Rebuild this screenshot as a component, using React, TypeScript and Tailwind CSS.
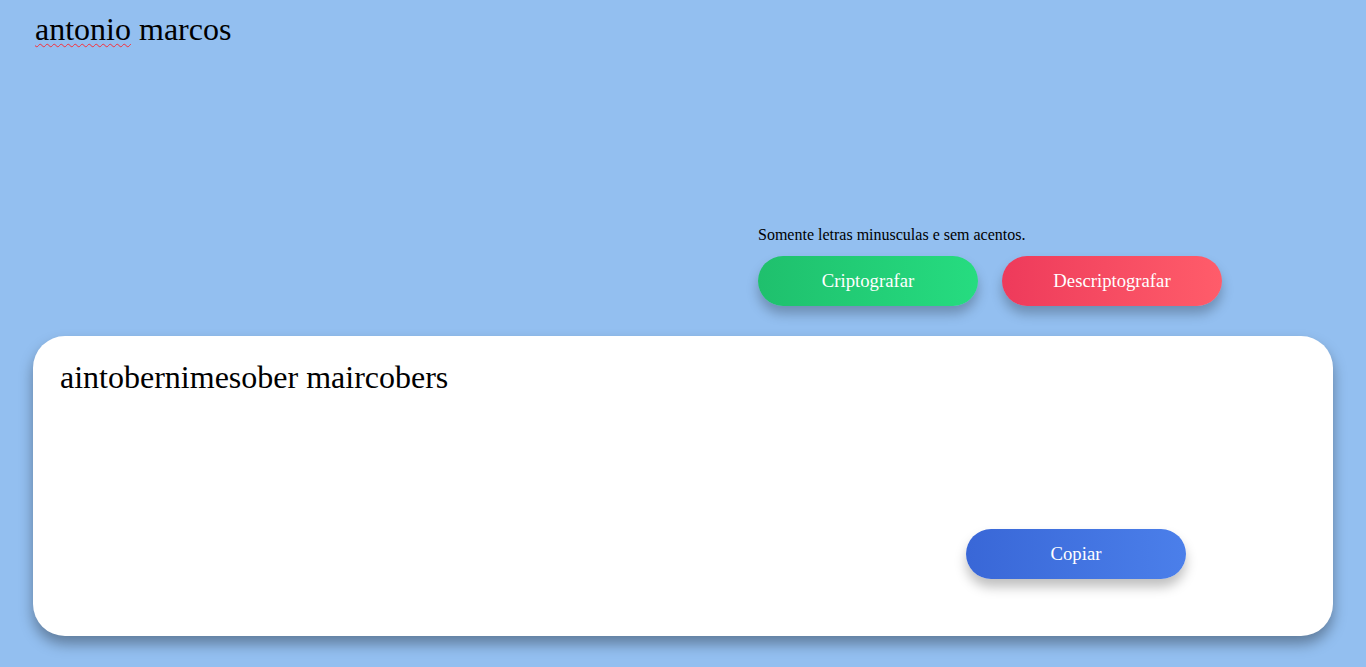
export default function App() {
  return (
    <div className="min-h-screen bg-[#93bff0] font-['Liberation_Serif',serif] text-black flex flex-col pb-[31px]">
      <h1 className="pl-[35px] pt-[11px] text-[32px] leading-[37px] font-normal">
        <span className="underline decoration-wavy decoration-red-500 decoration-1 underline-offset-[3px]">antonio</span> marcos
      </h1>

      <div className="ml-[758px] mt-[178px] flex flex-col">
        <p className="text-base leading-[18px]">Somente letras minusculas e sem acentos.</p>
        <div className="mt-[12px] flex gap-6">
          <button className="h-[50px] w-[220px] rounded-full bg-gradient-to-r from-[#1fc06d] to-[#26dc80] text-[18.7px] text-white shadow-[0_8px_12px_rgba(0,0,0,0.25)]">
            Criptografar
          </button>
          <button className="h-[50px] w-[220px] rounded-full bg-gradient-to-r from-[#ee3a5b] to-[#ff5c6a] text-[18.7px] text-white shadow-[0_8px_12px_rgba(0,0,0,0.25)]">
            Descriptografar
          </button>
        </div>
      </div>

      <div className="mx-[33px] mt-[30px] h-[300px] rounded-[32px] bg-white pl-[27px] pt-[23px] shadow-[0_8px_14px_rgba(0,0,0,0.35)] flex flex-col">
        <p className="text-[32px] leading-[37px]">aintobernimesober maircobers</p>
        <button className="ml-[906px] mt-[133px] h-[50px] w-[220px] rounded-full bg-gradient-to-r from-[#3967d7] to-[#4b7fea] text-[18.7px] text-white shadow-[0_8px_12px_rgba(0,0,0,0.25)]">
          Copiar
        </button>
      </div>
    </div>
  );
}
